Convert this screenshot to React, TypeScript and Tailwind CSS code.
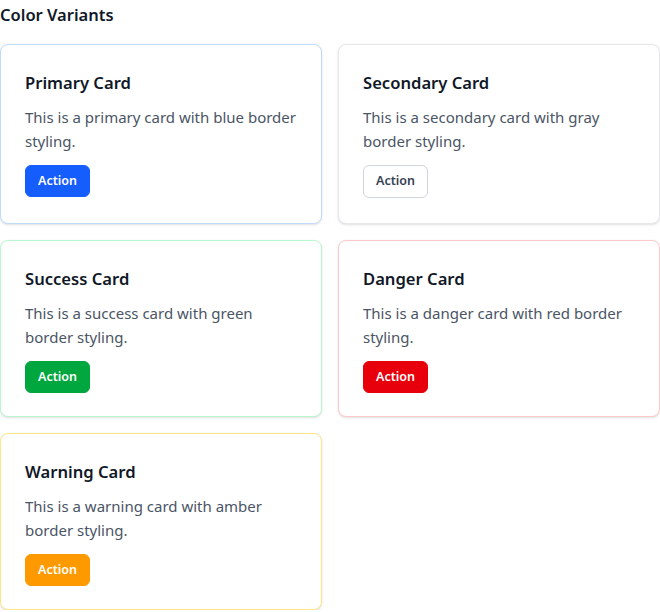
import React from "react";

type Variant = {
  title: string;
  text: string;
  border: string;
  button: string;
  pad: string;
};

const variants: Variant[] = [
  {
    title: "Primary Card",
    text: "This is a primary card with blue border styling.",
    border: "border-blue-200",
    button: "h-8 bg-blue-600 text-white border border-blue-600",
    pad: "pb-[23px]",
  },
  {
    title: "Secondary Card",
    text: "This is a secondary card with gray border styling.",
    border: "border-gray-200",
    button: "h-[33px] bg-white text-gray-700 border border-gray-300",
    pad: "pb-[25px]",
  },
  {
    title: "Success Card",
    text: "This is a success card with green border styling.",
    border: "border-green-200",
    button: "h-8 bg-green-600 text-white border border-green-600",
    pad: "pb-[23px]",
  },
  {
    title: "Danger Card",
    text: "This is a danger card with red border styling.",
    border: "border-red-200",
    button: "h-8 bg-red-600 text-white border border-red-600",
    pad: "pb-[23px]",
  },
  {
    title: "Warning Card",
    text: "This is a warning card with amber border styling.",
    border: "border-amber-200",
    button: "h-8 bg-amber-500 text-white border border-amber-500",
    pad: "pb-[23px]",
  },
];

export default function App() {
  return (
    <div className="w-[660px] bg-white font-['Noto_Sans',sans-serif]">
      <h2 className="text-[16.5px] font-semibold text-gray-900 leading-[30px]">Color Variants</h2>
      <div className="mt-[14px] grid grid-cols-2 gap-4">
        {variants.map((v) => (
          <div
            key={v.title}
            className={`flex flex-col items-start rounded-lg border ${v.border} bg-white px-6 pt-6 ${v.pad} shadow-sm`}
          >
            <h3 className="text-[16.6px] font-semibold leading-7 text-gray-900">{v.title}</h3>
            <p className="mt-[8px] text-[15px] leading-6 text-gray-600">{v.text}</p>
            <button
              className={`mt-[12px] block rounded-md px-3 text-[12.5px] font-semibold ${v.button}`}
            >
              Action
            </button>
          </div>
        ))}
      </div>
    </div>
  );
}
